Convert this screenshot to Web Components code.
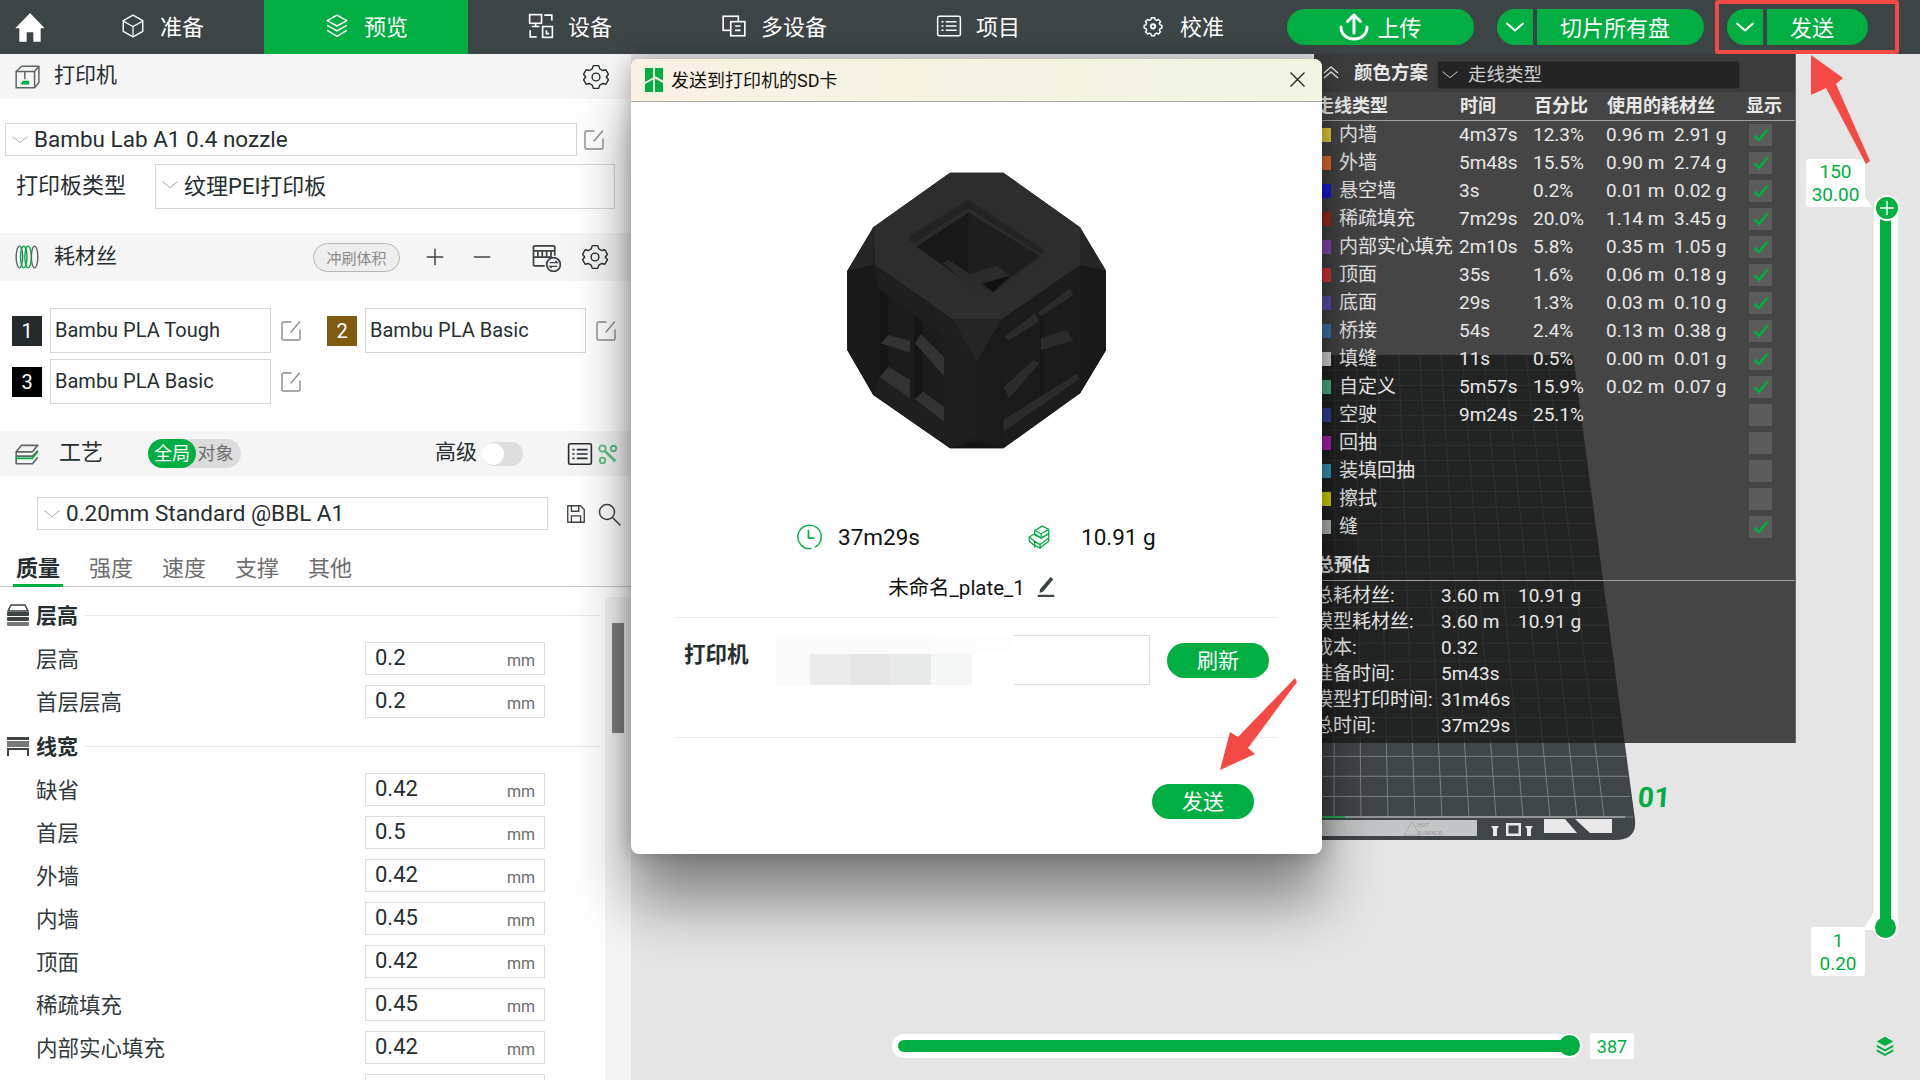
<!DOCTYPE html>
<html lang="zh-CN">
<head>
<meta charset="utf-8">
<title>Bambu Studio</title>
<style>
  html, body { margin: 0; height: 100%; }
  body {
    width: 1920px; height: 1080px; overflow: hidden;
    font-family: Roboto, "Noto Sans CJK SC", sans-serif;
    color: #262e30; background: #e5e5e5;
  }
  #app { display: flex; flex-direction: column; width: 1920px; height: 1080px; position: relative; overflow: hidden; }
  #work { display: flex; flex: 1; min-height: 0; }
</style>
</head>
<body>
<div id="app">
  <top-bar>
    <nav-tab icon="cube">准备</nav-tab>
    <nav-tab icon="layers" active>预览</nav-tab>
    <nav-tab icon="device">设备</nav-tab>
    <nav-tab icon="multi">多设备</nav-tab>
    <nav-tab icon="list">项目</nav-tab>
    <nav-tab icon="calib">校准</nav-tab>
    <action-button slot="actions" icon="upload" style="width:187px">上传</action-button>
    <action-button slot="actions" split style="width:207px">切片所有盘</action-button>
    <action-button slot="actions" split style="width:141px">发送</action-button>
  </top-bar>
  <div id="work">
    <side-panel></side-panel>
    <plate-view></plate-view>
  </div>
  <send-dialog></send-dialog>
  <note-marks></note-marks>
</div>

<script>
const GREEN = "#00ae42";

const ICONS = {
  home: `<path fill="currentColor" d="M12 1.500 23 13h-3v10h-5.500v-7h-5v7H4V13H1z"/>`,
  cube: `<g fill="none" stroke="currentColor" stroke-width="1.300" stroke-linejoin="round"><path d="M12 2l9 5v10l-9 5-9-5V7z"/><path d="M3 7.500l9 5 9-5M12 12.500V22" stroke-width="1.100"/></g>`,
  layers: `<g fill="none" stroke="currentColor" stroke-width="1.400" stroke-linejoin="round"><path d="M12 2l9 5-9 5-9-5z"/><path d="M3 11.500l9 5 9-5"/><path d="M3 16l9 5.500 9-5.500"/></g>`,
  device: `<g fill="none" stroke="currentColor" stroke-width="1.500"><rect x="1.500" y="1.500" width="11" height="8"/><path d="M7 9.500v3M3.500 12.500h7" /><path d="M15 2h7v5M2 16v6h6"/><rect x="13.500" y="12.500" width="9" height="10"/><path d="M17 16v3h2.500"/></g>`,
  multi: `<g fill="none" stroke="currentColor" stroke-width="1.500"><rect x="2" y="3" width="14" height="13"/><rect x="9" y="8" width="13" height="13" fill="#3d4446"/><path d="M13 12h5M13 16h5"/></g>`,
  list: `<g fill="none" stroke="currentColor" stroke-width="1.400"><rect x="1.500" y="3" width="21" height="18" rx="1.500"/><path d="M5 8h2M5 12h2M5 16h2M9 8h10M9 12h10M9 16h10"/></g>`,
  calib: `<g fill="none" stroke="currentColor" stroke-width="1.800" stroke-linejoin="round"><path d="M10 3.500h4l.6 2.300 2 .9 2.100-1.200 2.500 2.700-1.300 2 .7 2 2.300.6v3.400l-2.300.6-.7 2-.1 0 1.400 2-2.500 2.700-2.100-1.200-2 .9-.6 2.300h-4l-.6-2.300-2-.9-2.100 1.200-2.500-2.700 1.400-2-.8-2-2.300-.6v-3.400l2.300-.6.7-2-1.300-2 2.500-2.700 2.100 1.200 2-.9z" transform="translate(3 1.800) scale(.75)"/><circle cx="12" cy="12.300" r="2"/></g>`,
  upload: `<g fill="none" stroke="currentColor" stroke-width="3" stroke-linecap="round" stroke-linejoin="round"><path d="M15 21V3.500M8.500 9.500 15 3l6.500 6.500"/><path d="M2 15c0 7 5.500 12 13 12s13-5 13-12"/></g>`,
  chevron: `<path fill="none" stroke="currentColor" stroke-width="2" stroke-linecap="round" stroke-linejoin="round" d="M4 8.500l8 7 8-7"/>`,
  chevronThin: `<path fill="none" stroke="currentColor" stroke-width="1.300" stroke-linejoin="round" d="M2 7.500l10 8 10-8"/>`,
  gear: `<g fill="none" stroke="currentColor" stroke-width="1.300" stroke-linejoin="round"><path d="M9.500 1.500h5l1 3 2.600 1.500 3-.7 2.400 4.200-2 2.500 2 2.500-2.400 4.200-3-.7-2.600 1.500-1 3h-5l-1-3-2.600-1.500-3 .7L.5 14.500l2-2.500-2-2.500 2.400-4.200 3 .7 2.600-1.500z"/><circle cx="12" cy="12" r="3.600"/></g>`,
  edit: `<g fill="none" stroke="#8a8f90" stroke-width="1.400" stroke-linecap="round"><path d="M12 3H4.500A1.500 1.500 0 0 0 3 4.500v15A1.500 1.500 0 0 0 4.500 21h15a1.500 1.500 0 0 0 1.500-1.500V11"/><path d="M12 13 20.500 3"/></g>`,
  printer: `<g fill="none" stroke="#5f6668" stroke-width="1.400"><path d="M2 7h17v15H2zM7 2h16v15l-4 5M2 7l5-5M19 7l4-5"/><path d="M10 7v7"/></g><path fill="${GREEN}" d="M6 19l2-3.500h6V19z"/>`,
  spool: `<g fill="none" stroke-width="1.300"><ellipse cx="5" cy="12" rx="3" ry="10" stroke="#5f6668"/><ellipse cx="9" cy="12" rx="3" ry="10" stroke="${GREEN}"/><ellipse cx="13" cy="12" rx="3" ry="10" stroke="${GREEN}"/><ellipse cx="19" cy="12" rx="3" ry="10" stroke="#5f6668"/></g>`,
  stack: `<g fill="none" stroke-width="1.500" stroke-linejoin="round"><path stroke="#5f6668" d="M2 10l5-6h15l-5 6H2zM2 10v4l15 0 5-5"/><path stroke="${GREEN}" d="M2 14l0 2h15l5-6"/><path stroke="#5f6668" d="M2 16v5h15l5-6"/></g>`,
  plus: `<path stroke="#3c4446" stroke-width="1.600" d="M12 3v18M3 12h18"/>`,
  minus: `<path stroke="#3c4446" stroke-width="1.600" d="M3 12h18"/>`,
  ams: `<g fill="none" stroke="#3c4446" stroke-width="1.400"><path d="M2 19V4a1 1 0 0 1 1-1h15a1 1 0 0 1 1 1v7M2 19h9"/><path d="M2 7h17M5.500 7v5M9 7v5M12.500 7v5M16 7v5M2 12h14"/><circle cx="18" cy="18" r="5.500"/><path d="M15 16.500h6l-1.500-1.300M21 19.500h-6l1.500 1.300" stroke-width="1.100"/></g>`,
  save: `<g fill="none" stroke="#3c4446" stroke-width="1.500" stroke-linejoin="round"><path d="M3 3h14l4 4v14H3z"/><path d="M7 3v6h8V3M7 21v-7h10v7"/></g>`,
  search: `<g fill="none" stroke="#3c4446" stroke-width="1.500" stroke-linecap="round"><circle cx="10" cy="10" r="7.500"/><path d="M15.500 15.500 23 23"/></g>`,
  table: `<g fill="none" stroke="#262e30" stroke-width="1.500"><rect x="1.500" y="2.500" width="21" height="19" rx="1.500"/><path d="M5 8h2M5 12h2M5 16h2M9 8h10M9 12h10M9 16h10"/></g>`,
  tools: `<g fill="none" stroke="#5fbf86" stroke-width="2"><circle cx="6" cy="6" r="3.500"/><circle cx="18" cy="6" r="3"/><circle cx="6" cy="19" r="3"/><path d="M9 9l11 11" stroke-width="3"/></g>`,
  layerHeight: `<g fill="#3c4446"><path d="M5 2h14l3 6H2z" fill="none" stroke="#3c4446" stroke-width="1.500"/><rect x="1" y="9" width="22" height="4" rx="1"/><rect x="1" y="14" width="22" height="4" rx="1"/><rect x="1" y="19" width="22" height="4" rx="1" fill="#777"/></g>`,
  lineWidth: `<g fill="#3c4446"><rect x="1" y="3" width="22" height="3"/><rect x="1" y="7" width="22" height="6" fill="#777"/><rect x="1" y="14" width="22" height="2"/><rect x="1" y="16" width="2" height="6"/><rect x="21" y="16" width="2" height="6"/></g>`,
  clock: `<g fill="none" stroke="${GREEN}" stroke-width="1.300" stroke-linecap="round"><path d="M14 22.600A10.800 10.800 0 1 1 18 21.200"/><path d="M11.500 6v7h5" stroke-width="1.500"/></g>`,
  bricks: `<g fill="none" stroke="${GREEN}" stroke-width="1.200" stroke-linejoin="round"><path d="M8 6l7-4 6 3v4l-7 4-6-3z"/><path d="M8 6l6 3 7-4M14 9v4"/><path d="M3 12l5-3 6 4 7-4v7l-8 6-5-2-5-4z"/><path d="M3 12l5 4v6M8 16l5 3 8-6M13 19v4"/></g>`,
  pencil: `<path fill="#3c4446" d="M17 1l3 2.500L9 17l-4 1.500.5-4zM3 20.500h18V23H3z"/>`,
  stackGreen: `<g fill="${GREEN}"><path d="M12 2l9 5-9 5-9-5z"/><path d="M3 10.500l9 5 9-5v2.500l-9 5-9-5z"/><path d="M3 15.500l9 5 9-5v2.500l-9 5-9-5z"/></g>`
};

function icon(name, size, extra = "") {
  const vb = name === "upload" ? "0 0 30 30" : "0 0 24 24";
  return `<svg width="${size}" height="${size}" viewBox="${vb}" style="display:block;flex:none;${extra}" aria-hidden="true">${ICONS[name]}</svg>`;
}

class TopBar extends HTMLElement {
  connectedCallback() {
    this.attachShadow({ mode: "open" }).innerHTML = `
    <style>
      :host { display: flex; height: 54px; flex: none; background: #3d4446; color: #fff; }
      .home { width: 60px; display: flex; align-items: center; justify-content: center; box-sizing: border-box; }
      .tabs { display: flex; }
      .actions { display: flex; gap: 23px; align-items: center; padding-left: 3px; }
    </style>
    <div class="home">${icon("home", 32)}</div>
    <div class="tabs"><slot></slot></div>
    <div class="actions"><slot name="actions"></slot></div>`;
  }
}

class NavTab extends HTMLElement {
  connectedCallback() {
    this.attachShadow({ mode: "open" }).innerHTML = `
    <style>
      :host { display: flex; width: 204px; height: 54px; box-sizing: border-box; padding-bottom: 2px; align-items: center; justify-content: center; gap: 14px; font-size: 22px; color: #fff; }
      :host([active]) { background: ${GREEN}; }
      .t { margin-top: -3px; }
    </style>
    ${icon(this.getAttribute("icon"), 26)}<div class="t"><slot></slot></div>`;
  }
}

class ActionButton extends HTMLElement {
  connectedCallback() {
    const split = this.hasAttribute("split");
    this.attachShadow({ mode: "open" }).innerHTML = `
    <style>
      :host { display: flex; height: 36px; font-size: 22px; color: #fff; }
      .drop { width: 36px; background: ${GREEN}; border-radius: 18px 0 0 18px; display: flex; align-items: center; justify-content: center; margin-right: 4px; }
      .main { flex: 1; background: ${GREEN}; display: flex; align-items: center; justify-content: center; gap: 8px; border-radius: ${split ? "0 18px 18px 0" : "18px"}; box-sizing: border-box; padding: 0 ${split ? "11px" : "0"} 3px 0; }
    </style>
    ${split ? `<div class="drop">${icon("chevron", 24)}</div>` : ""}
    <div class="main">${this.hasAttribute("icon") ? icon(this.getAttribute("icon"), 30, "margin-top:3px") : ""}<slot></slot></div>`;
  }
}

class SectionHead extends HTMLElement {
  connectedCallback() {
    this.attachShadow({ mode: "open" }).innerHTML = `
    <style>
      :host { display: flex; align-items: center; background: #f5f5f5; font-size: 21px; color: #262e30; flex: none; position: relative; }
      .ic { width: 54px; display: flex; align-items: center; padding-left: 14px; box-sizing: border-box; }
      ::slotted([slot=actions]) { margin-left: auto; }
    </style>
    <div class="ic">${icon(this.getAttribute("icon"), 26)}</div>
    <slot></slot><slot name="actions"></slot>`;
  }
}

class SelectBox extends HTMLElement {
  connectedCallback() {
    this.attachShadow({ mode: "open" }).innerHTML = `
    <style>
      :host { display: flex; align-items: center; box-sizing: border-box; border: 1px solid #d6d6d6; background: #fff; font-size: 22.500px; color: #262e30; flex: none; }
      .c { width: 28px; flex: none; display: flex; justify-content: center; color: #a8a8a8; }
      .t { margin-top: -2px; }
    </style>
    <div class="c">${icon("chevronThin", 18)}</div><div class="t"><slot></slot></div>`;
  }
}

class FilamentSlot extends HTMLElement {
  connectedCallback() {
    this.attachShadow({ mode: "open" }).innerHTML = `
    <style>
      :host { display: flex; align-items: center; width: 315px; }
      .n { width: 30px; height: 30px; color: #fff; font-size: 20px; display: flex; align-items: center; justify-content: center; background: ${this.getAttribute("color")}; flex: none; }
      .f { width: 221px; height: 45px; margin-left: 8px; box-sizing: border-box; border: 1px solid #d6d6d6; display: flex; align-items: center; padding-left: 4px; font-size: 20px; flex: none; padding-bottom: 2px; }
      .e { margin-left: 8px; }
    </style>
    <div class="n">${this.getAttribute("num")}</div>
    <div class="f"><slot></slot></div>
    <div class="e">${icon("edit", 24)}</div>`;
  }
}

class ParamGroup extends HTMLElement {
  connectedCallback() {
    this.attachShadow({ mode: "open" }).innerHTML = `
    <style>
      :host { display: block; padding-top: 1px; }
      .h { height: 34px; margin-bottom: 10px; display: flex; align-items: center; font-size: 21px; font-weight: 700; }
      .i { width: 36px; padding-left: 6px; box-sizing: border-box; }
      .l { flex: 1; height: 1px; background: #eaeaea; margin-left: 6px; margin-right: 5px; }
      span { margin-top: -2px; }
    </style>
    <div class="h"><div class="i">${icon(this.getAttribute("icon"), 24)}</div><span>${this.getAttribute("title")}</span><div class="l"></div></div>
    <slot></slot>`;
  }
}

class ParamRow extends HTMLElement {
  connectedCallback() {
    this.attachShadow({ mode: "open" }).innerHTML = `
    <style>
      :host { display: flex; align-items: center; height: 33px; margin-bottom: 10px; padding-left: 36px; font-size: 21.500px; color: #323a3c; }
      .lab { width: 329px; flex: none; margin-top: -3px; }
      .inp { width: 180px; height: 33px; box-sizing: border-box; border: 1px solid #dcdcdc; display: flex; align-items: center; justify-content: space-between; padding: 0 9px; color: #262e30; font-size: 22px; }
      .inp span:first-child { margin-top: -2px; }
      .unit { font-size: 16px; color: #6b6b6b; padding-top: 3px; }
    </style>
    <div class="lab"><slot></slot></div>
    <div class="inp"><span>${this.getAttribute("value")}</span><span class="unit">mm</span></div>`;
  }
}

class SidePanel extends HTMLElement {
  connectedCallback() {
    const rows = (list) => list.map(([l, v]) => `<param-row value="${v}">${l}</param-row>`).join("");
    this.attachShadow({ mode: "open" }).innerHTML = `
    <style>
      :host { display: flex; flex-direction: column; width: 631px; flex: none; background: #fff; overflow: hidden; position: relative; }
      .h1 { height: 45px; } .h2 { height: 48px; } .h3 { height: 45px; }
      .name { margin-top: -7px; }
      .tools { display: flex; align-items: center; }
      .printer { height: 134px; box-sizing: border-box; padding: 24px 0 0 5px; }
      .r1 { display: flex; align-items: center; height: 33px; }
      .r2 { display: flex; align-items: center; margin-top: 8px; font-size: 22px; }
      .r2 span { width: 150px; padding-left: 11px; box-sizing: border-box; margin-top: -7px; }
      .fil { height: 150px; box-sizing: border-box; padding: 27px 0 0 12px; display: grid; grid-template-columns: 315px 315px; grid-auto-rows: 45px; row-gap: 6px; }
      .flush { font-size: 15px; color: #8a8a8a; border: 1px solid #b5b5b5; border-radius: 15px; background: #eee; height: 29px; width: 87px; box-sizing: border-box; display: flex; align-items: center; justify-content: center; margin-right: 24px; }
      .pill { width: 93px; height: 29px; border-radius: 15px; background: #dcdcdc; display: flex; font-size: 18px; margin-left: 45px; color: #6e6e6e; }
      .pill b { font-weight: 400; width: 48px; background: ${GREEN}; color: #fff; border-radius: 15px; display: flex; align-items: center; justify-content: center; padding-bottom: 3px; box-sizing: border-box; }
      .pill i { font-style: normal; flex: 1; display: flex; align-items: center; justify-content: center; padding: 0 6px 3px 0; }
      .adv { margin-left: auto; font-size: 21px; margin-right: 5px; margin-top: -7px; }
      .tog { width: 41px; height: 24px; border-radius: 12px; background: #dddddd; position: relative; margin-right: 48px; }
      .tog::after { content: ""; position: absolute; left: 0; top: 1px; width: 22px; height: 22px; border-radius: 50%; background: #fff; }
      .proc { display: flex; align-items: center; height: 54px; box-sizing: border-box; padding-top: 21px; padding-left: 37px; }
      .tabs { display: flex; height: 57px; box-sizing: border-box; border-bottom: 1px solid #c8c8c8; padding-left: 16px; gap: 29px; font-size: 22px; color: #6e6e6e; align-items: flex-end; flex: none; }
      .tabs span { padding-bottom: 2px; position: relative; line-height: 30px; width: 44px; white-space: nowrap; }
      .tabs .on { color: #262e30; font-weight: 700; }
      .tabs .on::after { content: ""; position: absolute; left: -3px; right: -3px; bottom: -1px; height: 3px; background: ${GREEN}; }
      .params { display: flex; flex: 1; min-height: 0; overflow: hidden; }
      .list { width: 605px; flex: none; padding-top: 10px; }
      .bar { width: 26px; flex: none; margin-top: 10px; background: #f4f4f4; padding: 26px 7px 0; box-sizing: border-box; }
      .bar div { height: 110px; background: #808080; }
    </style>
    <section-head class="h1" icon="printer"><span class="name">打印机</span><div slot="actions" style="margin-right:22px">${icon("gear", 26)}</div></section-head>
    <div class="printer">
      <div class="r1"><select-box style="width:572px;height:33px">Bambu Lab A1 0.4 nozzle</select-box><div style="margin-left:5px">${icon("edit", 24)}</div></div>
      <div class="r2"><span>打印板类型</span><select-box style="width:460px;height:45px;font-size:22px;padding-bottom:3px">纹理PEI打印板</select-box></div>
    </div>
    <section-head class="h2" icon="spool"><span class="name">耗材丝</span>
      <div slot="actions" class="tools"><div class="flush">冲刷体积</div>${icon("plus", 22)}<div style="width:25px"></div>${icon("minus", 22)}<div style="width:38px"></div>${icon("ams", 30)}<div style="width:21px"></div>${icon("gear", 26)}<div style="width:23px"></div></div>
    </section-head>
    <div class="fil">
      <filament-slot num="1" color="#252a2c">Bambu PLA Tough</filament-slot>
      <filament-slot num="2" color="#7f5c10">Bambu PLA Basic</filament-slot>
      <filament-slot num="3" color="#000">Bambu PLA Basic</filament-slot>
    </div>
    <section-head class="h3" icon="stack"><span class="name" style="margin-left:5px;font-size:22px">工艺</span>
      <div class="pill"><b>全局</b><i>对象</i></div>
      <span class="adv">高级</span><div class="tog"></div>
      <div slot="actions" class="tools" style="margin-left:0;margin-right:12px;gap:4px;margin-left:-4px">${icon("table", 26)}${icon("tools", 22)}</div>
    </section-head>
    <div class="proc"><select-box style="width:511px;height:33px">0.20mm Standard @BBL A1</select-box><div style="margin-left:17px">${icon("save", 22)}</div><div style="margin-left:10px">${icon("search", 24)}</div></div>
    <div class="tabs"><span class="on">质量</span><span>强度</span><span>速度</span><span>支撑</span><span>其他</span></div>
    <div class="params">
      <div class="list">
        <param-group icon="layerHeight" title="层高">${rows([["层高", "0.2"], ["首层层高", "0.2"]])}</param-group>
        <param-group icon="lineWidth" title="线宽">${rows([["缺省", "0.42"], ["首层", "0.5"], ["外墙", "0.42"], ["内墙", "0.45"], ["顶面", "0.42"], ["稀疏填充", "0.45"], ["内部实心填充", "0.42"], ["支撑", "0.42"]])}</param-group>
      </div>
      <div class="bar"><div></div></div>
    </div>`;
  }
}

class LegendPanel extends HTMLElement {
  connectedCallback() {
    const data = [
      ["#e8d13c", "内墙", "4m37s", "12.3%", "0.96 m", "2.91 g", 1],
      ["#e8702e", "外墙", "5m48s", "15.5%", "0.90 m", "2.74 g", 1],
      ["#1a1ae0", "悬空墙", "3s", "0.2%", "0.01 m", "0.02 g", 1],
      ["#a32a22", "稀疏填充", "7m29s", "20.0%", "1.14 m", "3.45 g", 1],
      ["#8a4bb8", "内部实心填充", "2m10s", "5.8%", "0.35 m", "1.05 g", 1],
      ["#d93636", "顶面", "35s", "1.6%", "0.06 m", "0.18 g", 1],
      ["#5b52b0", "底面", "29s", "1.3%", "0.03 m", "0.10 g", 1],
      ["#3f76b0", "桥接", "54s", "2.4%", "0.13 m", "0.38 g", 1],
      ["#dddddd", "填缝", "11s", "0.5%", "0.00 m", "0.01 g", 1],
      ["#4eb583", "自定义", "5m57s", "15.9%", "0.02 m", "0.07 g", 1],
      ["#33409a", "空驶", "9m24s", "25.1%", "", "", 0],
      ["#b01fbb", "回抽", "", "", "", "", 0],
      ["#3a9abd", "装填回抽", "", "", "", "", 0],
      ["#dcdc00", "擦拭", "", "", "", "", 0],
      ["#bbbbbb", "缝", "", "", "", "", 1]
    ];
    const rows = data.map(([c, n, t, p, m, g, on]) => `
      <div class="row"><i style="background:${c}"></i><span>${n}</span><span>${t}</span><span>${p}</span><span>${m}</span><span>${g}</span>
      <b>${on ? `<svg width="16" height="14" viewBox="0 0 16 14"><path d="M1.500 7.500 6 12 14.500 1.500" fill="none" stroke="${GREEN}" stroke-width="2.600"/></svg>` : ""}</b></div>`).join("");
    const totals = [
      ["总耗材丝:", "3.60 m", "10.91 g"], ["模型耗材丝:", "3.60 m", "10.91 g"], ["成本:", "0.32", ""],
      ["准备时间:", "5m43s", ""], ["模型打印时间:", "31m46s", ""], ["总时间:", "37m29s", ""]
    ].map(([a, b, c]) => `<div class="tot"><span>${a}</span><span>${b}</span><span>${c}</span></div>`).join("");
    this.attachShadow({ mode: "open" }).innerHTML = `
    <style>
      :host { position: absolute; left: 683px; top: 0; width: 482px; height: 689px; background: rgba(26,26,26,.794); color: #e8e8e8; font-size: 19px; display: block; line-height: 26px; border-right: 1px solid #666; box-sizing: border-box; }
      .scheme { height: 38px; display: flex; align-items: center; background: rgba(0,0,0,.12); }
      .scheme svg { margin-left: 7px; }
      .scheme b { margin-left: 13px; width: 83px; font-size: 18.500px; }
      .sel { width: 303px; height: 28px; margin-top: 4px; box-sizing: border-box; background: #242424; border: 1px solid #333; border-radius: 3px; display: flex; align-items: center; color: #cfcfcf; font-size: 18.500px; }
      .sel svg { margin: 0 9px 0 3px; }
      .head { height: 28px; display: grid; grid-template-columns: 144px 74px 73px 139px auto; align-items: center; border-bottom: 1px solid #a0a0a0; font-weight: 700; padding-left: 2px; font-size: 18px; }
      .row { height: 28px; display: grid; grid-template-columns: 17px 120px 74px 73px 68px 75px 23px; align-items: center; padding-left: 8px; white-space: nowrap; }
      .row i { width: 9px; height: 14px; }
      .row b { width: 23px; height: 22px; background: rgba(110,110,110,.55); display: flex; align-items: center; justify-content: center; }
      .sum { padding: 11px 0 0 2px; height: 28px; font-weight: 700; border-bottom: 1px solid #a0a0a0; box-sizing: content-box; font-size: 18px; }
      .tot { height: 26px; display: grid; grid-template-columns: 127px 77px auto; align-items: center; font-size: 19px; white-space: nowrap; }
      .tots { padding-top: 2px; }
    </style>
    <div class="scheme"><svg width="20" height="20" viewBox="0 0 20 20"><path d="M3 10l7-6 7 6M3 15l7-6 7 6" fill="none" stroke="#e0e0e0" stroke-width="1.400"/></svg><b>颜色方案</b>
      <div class="sel">${icon("chevronThin", 18)}走线类型</div></div>
    <div class="head"><span>走线类型</span><span>时间</span><span>百分比</span><span>使用的耗材丝</span><span>显示</span></div>
    ${rows}
    <div class="sum">总预估</div>
    <div class="tots">${totals}</div>`;
  }
}

class SliderTip extends HTMLElement {
  connectedCallback() {
    this.attachShadow({ mode: "open" }).innerHTML = `
    <style>
      :host { position: absolute; display: flex; flex-direction: column; align-items: center; justify-content: center; background: #fff; color: ${GREEN}; font-size: 19px; line-height: 23px; border-radius: 3px; box-sizing: border-box; }
    </style><slot></slot>`;
  }
}

class PlateView extends HTMLElement {
  connectedCallback() {
    let grid = "";
    for (let x = 1334; x < 1625; x += 27) {
      const top = x - (x - 1340) * 0.216;
      grid += `<line x1="${x}" y1="817" x2="${top}" y2="355"/>`;
    }
    let y = 817, step = 20.500;
    while (y > 360) {
      const right = 1573 + (y - 355) * 0.13;
      grid += `<line x1="1300" y1="${y}" x2="${right}" y2="${y}"/>`;
      y -= step; step = Math.max(15, step * 0.985);
    }
    this.attachShadow({ mode: "open" }).innerHTML = `
    <style>
      :host { display: block; flex: 1; position: relative; background: #e5e5e5; overflow: hidden; }
      svg.bed { position: absolute; left: 0; top: 0; }
      .num { position: absolute; left: 1007px; top: 727px; font-size: 28px; font-weight: 700; color: ${GREEN}; transform: skewX(-4deg); }
      .vtrack { position: absolute; left: 1243px; top: 142px; width: 24px; height: 744px; background: #fff; border-radius: 12px; }
      .vfill { position: absolute; left: 6px; top: 12px; width: 11px; height: 720px; background: ${GREEN}; }
      .thumb { position: absolute; width: 21px; height: 21px; border-radius: 50%; background: ${GREEN}; color: #fff; display: flex; align-items: center; justify-content: center; }
      .htrack { position: absolute; left: 261px; top: 980px; width: 690px; height: 24px; background: #fff; border-radius: 12px; }
      .hfill { position: absolute; left: 6px; top: 6px; width: 670px; height: 12px; background: ${GREEN}; border-radius: 6px 0 0 6px; }
      .lay { position: absolute; left: 1243px; top: 981px; }
    </style>
    <svg class="bed" width="1289" height="1026" viewBox="631 54 1289 1026">
      <path fill="#404547" d="M1200 355H1573L1635 820Q1637 840 1615 840H1200z"/>
      <g stroke="#8a8f90" stroke-width="1" opacity=".8">${grid}</g>
      <path d="M1300 817H1625" stroke="#a5a9aa" stroke-width="1.500"/>
      <path d="M1300 817H1345" stroke="${GREEN}" stroke-width="1.500"/>
      <rect x="1300" y="820" width="177" height="16" fill="#c3c6c6"/>
      <path d="M1404 835l8-13 8 13z" fill="none" stroke="#aaa"/>
      <text x="1417" y="827" font-size="6" fill="#9a9a9a" font-family="Roboto">HOT</text>
      <text x="1417" y="835" font-size="6" fill="#9a9a9a" font-family="Roboto">SURFACE</text>
      <g fill="#e8e8e8"><path d="M1491 826h8l-2 3v7h-4v-7zM1525 826h8l-2 3v7h-4v-7z"/><path fill-rule="evenodd" d="M1506 823h15v13h-15zM1508.500 825.500v8h10v-8z"/><path d="M1544 819h21l12 14h-33zM1575 819h37v14h-22z"/></g>
    </svg>
    <div class="num">01</div>
    <legend-panel></legend-panel>
    <div class="vtrack"><div class="vfill"></div></div>
    <div class="thumb" style="border:2px solid #fff;width:22px;height:22px;box-sizing:content-box;left:1243px;top:141px"><svg width="14" height="14" viewBox="0 0 14 14"><path d="M7 0v14M0 7h14" stroke="#fff" stroke-width="1.400"/></svg></div>
    <div class="thumb" style="left:1244px;top:863px"></div>
    <slider-tip style="left:1175px;top:105px;width:59px;height:48px"><span>150</span><span>30.00</span></slider-tip>
    <svg style="position:absolute;left:1232px;top:140px" width="10" height="14" viewBox="0 0 10 14"><path d="M0 0l9 13H0z" fill="#fff"/></svg>
    <slider-tip style="left:1180px;top:873px;width:54px;height:49px"><span>1</span><span>0.20</span></slider-tip>
    <svg style="position:absolute;left:1232px;top:858px" width="12" height="18" viewBox="0 0 12 18"><path d="M0 18 11 0v18z" fill="#fff"/></svg>
    <div class="htrack"><div class="hfill"></div></div>
    <div class="thumb" style="left:928px;top:981px"></div>
    <slider-tip style="left:959px;top:979px;width:44px;height:26px;font-size:18px">387</slider-tip>
    <div class="lay">${icon("stackGreen", 22)}</div>`;
  }
}

class SendDialog extends HTMLElement {
  connectedCallback() {
    this.attachShadow({ mode: "open" }).innerHTML = `
    <style>
      :host { position: absolute; left: 631px; top: 59px; width: 691px; height: 795px; display: block; background: #fff; border-radius: 8px; box-shadow: 0 48px 60px rgba(0,0,0,.42), 0 0 22px rgba(0,0,0,.28); color: #111; }
      .title { height: 43px; box-sizing: border-box; display: flex; align-items: center; background: linear-gradient(90deg, #f9f1e3, #f1f5e3); border-bottom: 1px solid #a8a8a8; border-radius: 8px 8px 0 0; padding-left: 14px; font-size: 18px; }
      .title span { margin: -3px 0 0 8px; }
      .x { margin-left: auto; margin-right: 17px; margin-top: -2px; }
      .model { display: block; margin: 48px 0 0 169px; }
      .stats { display: flex; align-items: center; height: 40px; margin-top: 47px; padding-left: 165px; font-size: 22.500px; }
      .stats span { margin-left: 16px; width: 188px; }
      .stats span:last-child { margin-left: 29px; width: auto; }
      .name { display: flex; align-items: center; justify-content: center; gap: 10px; height: 34px; margin-top: 13px; font-size: 20.500px; padding-right: 8px; }
      .name span { margin-top: -3px; }
      hr { border: 0; height: 1px; background: #ececec; margin: 13px 45px 0; }
      .pr { display: flex; padding-top: 17px; height: 50px; position: relative; }
      .pr b { width: 145px; padding-left: 53px; box-sizing: border-box; font-size: 21.500px; line-height: 40px; color: #262e30; }
      .box { width: 374px; height: 50px; box-sizing: border-box; border: 1px solid #dcdcdc; position: relative; }
      .blur { position: absolute; left: -1px; top: -1px; width: 238px; height: 50px; display: grid; grid-template-columns: 34px 40px 40px 41px 41px 42px; grid-template-rows: 19px 31px; background: #fff; }
      .btn { background: ${GREEN}; color: #fff; width: 102px; height: 35px; border-radius: 18px; font-size: 21px; display: flex; align-items: center; justify-content: center; flex: none; box-sizing: border-box; padding-bottom: 3px; }
      .foot { display: flex; justify-content: flex-end; padding: 46px 68px 0 0; }
    </style>
    <div class="title"><svg width="18" height="24" viewBox="0 0 18 24" style="flex:none"><path fill="${GREEN}" d="M0 0h8v9.500L0 14zM10 0h8v12.500L10 8zM0 16l8-4.500V24H0zM10 10.500l8 4.500V24h-8z"/></svg><span>发送到打印机的SD卡</span>
      <div class="x"><svg width="15" height="15" viewBox="0 0 15 15" style="display:block"><path d="M.5.5l14 14M14.500.5l-14 14" stroke="#222" stroke-width="1.300"/></svg></div></div>
    <svg class="model" width="340" height="320" viewBox="0 0 1020 960">
      <path fill="#1b1b1b" d="M450 68H610L840 232 918 362V600L840 730 610 895H450L220 735 142 600V362L220 232z"/>
      <path fill="#1f1f1f" d="M142 362 220 345 458 508 530 635V862L450 895 220 735 142 600z"/>
      <path fill="#191919" d="M142 362 220 345 238 420V680L220 735 142 600z"/>
      <path fill="#1c1c1c" d="M918 362 840 345 605 508 530 635V862L610 895 840 730 918 600z"/>
      <path fill="#1a1a1a" d="M530 635 610 510V895L530 862z"/>
      <path fill="#191919" d="M840 345 918 362V600L840 730z"/>
      <path fill="#141414" d="M450 895 530 872 610 895z"/>
      <path fill="#2d2d2d" d="M220 232 450 68H610L840 232V345L605 508H458L225 345z"/>
      <path fill="#262626" d="M142 362 220 232V345zM918 362 840 232V345z"/>
      <path fill="#252525" d="M458 508H605L530 635z"/>
      <path fill="#1c1c1c" d="M238 420 432 560V815L238 680z"/>
      <path fill="#151515" d="M238 420 265 437V652L238 680zM342 495 368 515V725L342 745z"/>
      <g fill="#333"><path d="M243 580 265 555 330 572V608zM345 580 362 552 432 622V678zM240 682 265 650 330 690V745zM345 748 368 725 432 770V815z"/></g>
      <path fill="#1b1b1b" d="M612 555 835 395V670L612 830z"/>
      <path fill="#161616" d="M720 495 732 490V725L720 735z"/>
      <g fill="#2b2b2b"><path d="M712 488 810 415 820 435 725 497zM612 560 705 490 718 515 628 570zM722 565 800 540 820 572 722 600zM610 712 700 630 718 640 628 745zM610 810 830 672 838 688 610 845z"/></g>
      <path fill="#232323" stroke="#232323" stroke-width="24" stroke-linejoin="round" d="M505 163 718 305 578 415 340 265z"/>
      <path fill="#2b2b2b" stroke="#2b2b2b" stroke-width="10" stroke-linejoin="round" d="M505 180 722 318 578 420 345 283z"/>
      <path fill="#1e1e1e" d="M505 188 720 318 578 422 350 290z"/>
      <path fill="#191919" d="M505 188 350 290 520 412 505 372z"/>
      <path fill="#2b2b2b" d="M430 340 445 330 510 372 590 348 630 378 545 400 530 425z"/>
      <path fill="#101010" d="M550 402 628 378 580 425z"/>
    </svg>
    <div class="stats">${icon("clock", 26)}<span>37m29s</span>${icon("bricks", 26)}<span>10.91 g</span></div>
    <div class="name"><span>未命名_plate_1</span>${icon("pencil", 22)}</div>
    <hr>
    <div class="pr"><b>打印机</b>
      <div class="box"><div class="blur">
        <i style="background:#fbfbfb"></i><i style="background:#fbfbfb"></i><i style="background:#fbfbfb"></i><i style="background:#fbfbfb"></i><i style="background:#fcfcfc"></i><i style="background:#fdfdfd"></i>
        <i style="background:#fafafa"></i><i style="background:#ebebeb"></i><i style="background:#e5e5e5"></i><i style="background:#e8e9e9"></i><i style="background:#f5f6f6"></i><i style="background:#fff"></i>
      </div></div>
      <div class="btn" style="margin:8px 0 0 17px">刷新</div>
    </div>
    <hr style="margin-top:52px">
    <div class="foot"><div class="btn">发送</div></div>`;
  }
}

class NoteMarks extends HTMLElement {
  connectedCallback() {
    this.attachShadow({ mode: "open" }).innerHTML = `
    <style>
      :host { position: absolute; left: 0; top: 0; width: 0; height: 0; display: block; }
      .frame { position: absolute; left: 1715px; top: 0; width: 184px; height: 54px; box-sizing: border-box; border: 4px solid #f44a45; border-radius: 3px; }
      svg { position: absolute; left: 0; top: 0; }
    </style>
    <div class="frame"></div>
    <svg width="1920" height="1080" viewBox="0 0 1920 1080">
      <path fill="#f44a45" d="M1811 55 1843 78 1836 84 1870 161 1866 164 1826 88 1811 95z"/>
      <path fill="#f44a45" d="M1295 678 1297 682 1248 748 1255 754 1220 770 1230 732 1238 737z"/>
    </svg>`;
  }
}

customElements.define("top-bar", TopBar);
customElements.define("nav-tab", NavTab);
customElements.define("action-button", ActionButton);
customElements.define("section-head", SectionHead);
customElements.define("select-box", SelectBox);
customElements.define("filament-slot", FilamentSlot);
customElements.define("param-group", ParamGroup);
customElements.define("param-row", ParamRow);
customElements.define("side-panel", SidePanel);
customElements.define("legend-panel", LegendPanel);
customElements.define("slider-tip", SliderTip);
customElements.define("plate-view", PlateView);
customElements.define("send-dialog", SendDialog);
customElements.define("note-marks", NoteMarks);
</script>
</body>
</html>
